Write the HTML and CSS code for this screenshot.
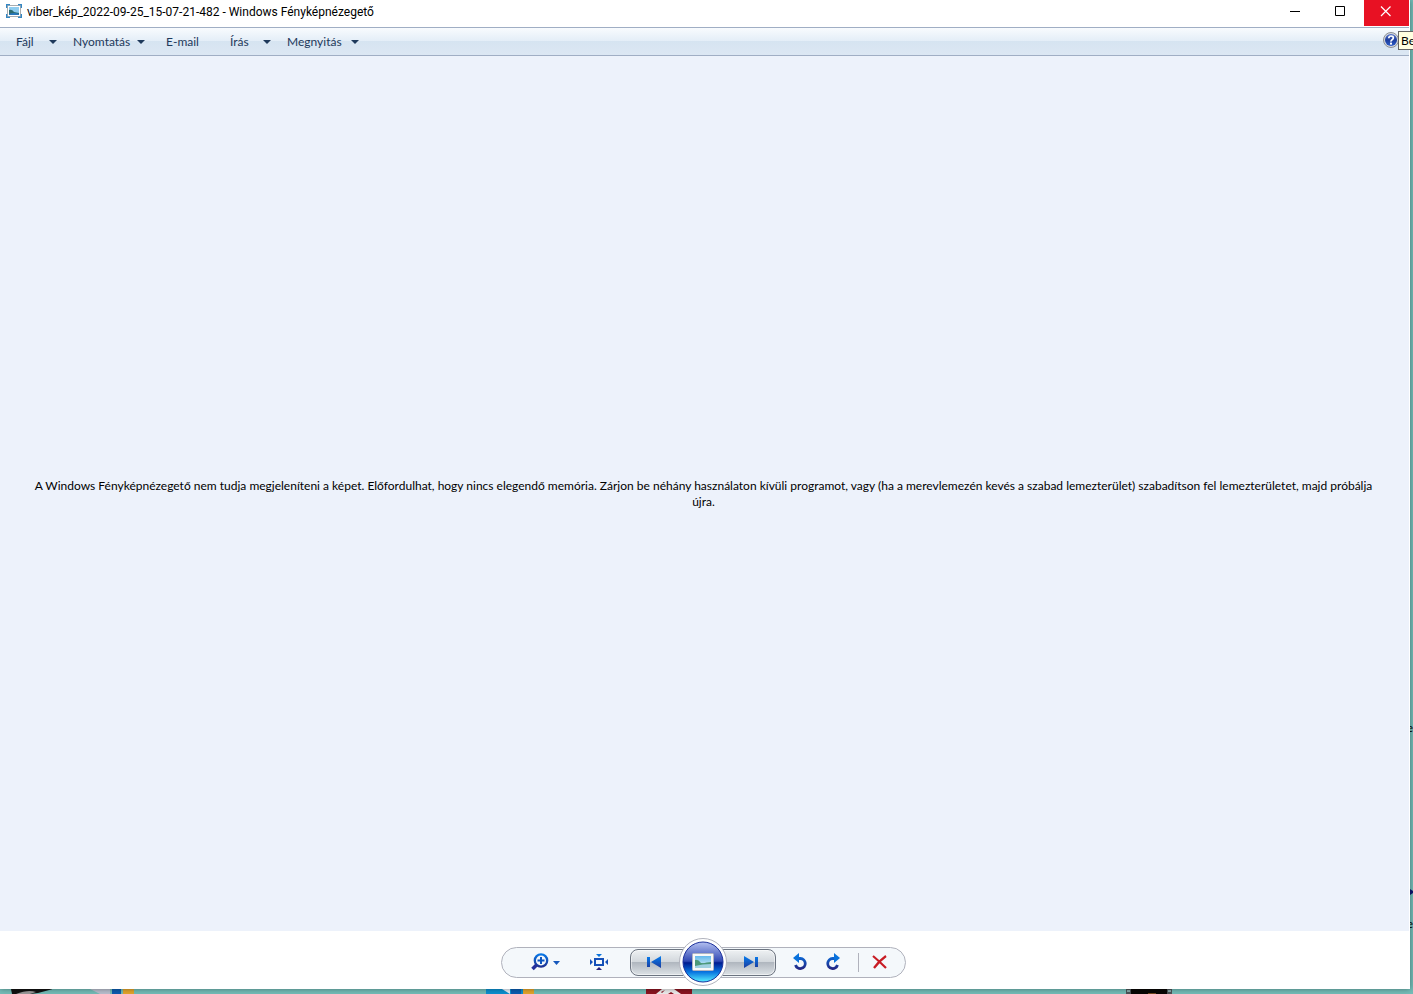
FILE: index.html
```html
<!DOCTYPE html>
<html lang="hu">
<head>
    <meta charset="UTF-8">
    <title>Windows Fényképnézegető</title>
    <link rel="stylesheet" href="styles.css">
</head>
<body>

    <!-- desktop showing around the window -->
    <div class="desktop" aria-hidden="true">
        <svg class="shortcut ink" width="48" height="5"><path d="M7 0h42L34 4l-8 1H8z" fill="#111"/><path d="M12 5q12-5 20-2l-6 2z" fill="#999"/></svg>
        <svg class="shortcut setup" width="48" height="5"><path d="M2 0h20v5H12z" fill="#b9bfce"/><path d="M24 0h9v5h-9z" fill="#0c5cb0"/><path d="M35 0h11v5H35z" fill="#e4a52c"/></svg>
        <svg class="shortcut cloud" width="48" height="5"><path d="M0 0h48v5H0z" fill="#0c90d0"/><path d="M16 0h8v5z" fill="#e8f2fa"/><path d="M25 0h10v5H25z" fill="#0c5cb0"/><path d="M37 0h11v5H37z" fill="#e4a52c"/></svg>
        <svg class="shortcut reader" width="48" height="5"><path d="M0 0h46v5H0z" fill="#8c1420"/><path d="M16 0h12l7 5H10z" fill="#eee"/><path d="M15 3l4-2-3 3zM22 5l3-2 3 2z" fill="#8c1420"/></svg>
        <svg class="shortcut film" width="48" height="5"><path d="M0 0h46v5H0z" fill="#4c5458"/><path d="M5 0h36v5H5z" fill="#080604"/><path d="M22 4h8v1h-8z" fill="#70451c"/><path d="M1 1h3v2H1zM42 1h3v2h-3z" fill="#88a8a8"/></svg>
        <span class="label label-top">e</span>
        <svg class="pointer" width="3" height="6"><path d="M0 0l3 2v2L0 6z" fill="#0c1470"/></svg>
        <span class="label label-bottom">e</span>
    </div>

    <div class="window">
        <header class="titlebar">
            <svg class="app-icon" width="16" height="14" viewBox="0 0 16 14">
                <rect x="1.500" y="1.500" width="13" height="11" fill="#fff" stroke="#a9adb0"/>
                <rect x="3" y="3" width="10" height="8" fill="#8fcdf0"/>
                <path d="M3 6q3-1 5 2l5 1v2H3z" fill="#2c6c70"/>
                <path d="M3 10q5-2 10 0v1H3z" fill="#2878bc"/>
                <path d="M.5 4V.5H4M12 .5h3.500V4M15.500 10v3.500H12M4 13.500H.5V10" fill="none" stroke="#3387c4" stroke-width="1.500"/>
            </svg>
            <h1>viber_kép_2022-09-25_15-07-21-482 - Windows Fényképnézegető</h1>
            <div class="window-buttons">
                <button aria-label="Kis méret"><svg width="11" height="11"><path d="M0 5.500h10" stroke="#000"/></svg></button>
                <button aria-label="Teljes méret"><svg width="11" height="11"><path d="M.5.500h9v9h-9z" fill="none" stroke="#000"/></svg></button>
                <button class="close" aria-label="Bezárás"><svg width="11" height="11"><path d="M1 .5l9.500 9.500M10.500.500L1 10" stroke="#fff" stroke-width="1.200"/></svg></button>
            </div>
        </header>

        <nav class="menubar">
            <button class="menu-short">Fájl <span class="arrow"></span></button>
            <button class="menu-long">Nyomtatás <span class="arrow"></span></button>
            <button class="menu-mail">E-mail</button>
            <button class="menu-short">Írás <span class="arrow"></span></button>
            <button class="menu-long">Megnyitás <span class="arrow"></span></button>
            <button class="help" aria-label="Súgó">
                <svg width="16" height="16" viewBox="0 0 16 16">
                    <defs><linearGradient id="helpFill" x2="0" y2="1"><stop stop-color="#5574c8"/><stop offset=".5" stop-color="#1c3c9c"/><stop offset="1" stop-color="#2c5cc8"/></linearGradient></defs>
                    <circle cx="8" cy="8" r="7.500" fill="#d5d8dc" stroke="#8b8f96"/>
                    <circle cx="8" cy="8" r="6" fill="url(#helpFill)"/>
                    <path d="M5.800 6.300q0-2.300 2.300-2.300t2.200 2q0 1-1.200 1.700T8 9.600" fill="none" stroke="#fff" stroke-width="1.700"/>
                    <rect x="7" y="10.600" width="2" height="2" fill="#fff"/>
                </svg>
            </button>
        </nav>

        <main class="viewer">
            <p>A Windows Fényképnézegető nem tudja megjeleníteni a képet. Előfordulhat, hogy nincs elegendő memória. Zárjon be néhány használaton kívüli programot, vagy (ha a merevlemezén kevés a szabad lemezterület) szabadítson fel lemezterületet, majd próbálja újra.</p>
        </main>

        <footer class="controls">
            <div class="pill">
                <button class="zoom" aria-label="Nagyítás">
                    <svg width="30" height="18" viewBox="0 0 30 18">
                        <defs><linearGradient id="blue" gradientUnits="userSpaceOnUse" x1="0" y1="1" x2="0" y2="17"><stop stop-color="#0878e8"/><stop offset="1" stop-color="#24207c"/></linearGradient></defs>
                        <circle cx="10" cy="7.500" r="6.200" fill="none" stroke="url(#blue)" stroke-width="2.300"/>
                        <path d="M6.500 7.500h7M10 4v7" stroke="#0c55c0" stroke-width="2"/>
                        <path d="M5.500 12L1.500 16" stroke="#24309c" stroke-width="3.500"/>
                        <path d="M22 8h7l-3.500 4z" fill="#1558bc"/>
                    </svg>
                </button>
                <button class="fit" aria-label="Tényleges méret">
                    <svg width="18" height="16" viewBox="0 0 18 16">
                        <rect x="5" y="5" width="8" height="6" fill="none" stroke="#1450b8" stroke-width="2"/>
                        <path d="M6 0h6L9 3z" fill="#0872dc"/>
                        <path d="M6 16h6l-3-3z" fill="#24207c"/>
                        <path d="M0 5v6l3-3zM18 5v6l-3-3z" fill="#1450b8"/>
                    </svg>
                </button>
                <div class="playback">
                    <button class="previous" aria-label="Előző">
                        <svg width="14" height="12" viewBox="0 0 14 12"><path d="M0 1h3v10H0zM14 0v12L4 6z" fill="url(#blue)"/></svg>
                    </button>
                    <button class="slideshow" aria-label="Diavetítés">
                        <svg width="48" height="48" viewBox="0 0 48 48">
                            <defs>
                                <linearGradient id="orb" x2="0" y2="1"><stop stop-color="#b4c0f0"/><stop offset=".48" stop-color="#3048b4"/><stop offset=".52" stop-color="#001c90"/><stop offset=".75" stop-color="#0874e0"/><stop offset="1" stop-color="#58f0ff"/></linearGradient>
                                <linearGradient id="sky" x2="0" y2="1"><stop stop-color="#62b8ec"/><stop offset="1" stop-color="#e0f4f4"/></linearGradient>
                            </defs>
                            <circle cx="24" cy="24" r="23.500" fill="#fff" stroke="#b0b2bc"/>
                            <circle cx="24" cy="24" r="20" fill="url(#orb)" stroke="#1c309c"/>
                            <rect x="13.500" y="15.500" width="21" height="17" rx="1" fill="#f8f8f8" stroke="#b0b4c0"/>
                            <rect x="16" y="18" width="16" height="12" fill="url(#sky)"/>
                            <path d="M16 22q3-1 6 3l10 1v2H16z" fill="#4c9878"/>
                            <path d="M22 26q6-2 10-2v3z" fill="#4c9878"/>
                            <path d="M16 28q7-2 16-2v4H16z" fill="#a0d0e0"/>
                        </svg>
                    </button>
                    <button class="next" aria-label="Következő">
                        <svg width="14" height="12" viewBox="0 0 14 12"><path d="M11 1h3v10h-3zM0 0v12l10-6z" fill="url(#blue)"/></svg>
                    </button>
                </div>
                <button class="rotate" aria-label="Forgatás balra">
                    <svg width="16" height="18" viewBox="0 0 16 18"><path d="M6 5.500h2.500a5 5 0 1 1-5 6.500" fill="none" stroke="url(#blue)" stroke-width="2.800"/><path d="M1 5l6-5v10z" fill="#0872dc"/></svg>
                </button>
                <button class="rotate" aria-label="Forgatás jobbra">
                    <svg width="16" height="18" viewBox="0 0 16 18"><path d="M10 5.500H7.500a5 5 0 1 0 5 6.500" fill="none" stroke="url(#blue)" stroke-width="2.800"/><path d="M15 5L9 0v10z" fill="#0872dc"/></svg>
                </button>
                <span class="divider"></span>
                <button class="delete" aria-label="Törlés">
                    <svg width="16" height="14" viewBox="0 0 16 14"><path d="M1 1q6 5 13 12M14 1Q7 6 2 13" fill="none" stroke="#c81c24" stroke-width="2.200"/></svg>
                </button>
            </div>
        </footer>
    </div>

    <div class="tooltip" role="tooltip">Be</div>

</body>
</html>
```

FILE: styles.css
```css
* {
    box-sizing: border-box;
}

body {
    position: relative;
    margin: 0;
    height: 100vh;
    padding: 0 3px 5px 0;
    overflow: hidden;
    background-color: #74bdb8;
    font-family: Lato, "Open Sans", sans-serif;
    font-size: 12px;
    color: #000;
}

button {
    display: flex;
    align-items: center;
    justify-content: center;
    padding: 0;
    border: none;
    background: none;
    font: inherit;
    color: inherit;
}

svg {
    display: block;
}

/* Desktop */
.desktop {
    position: absolute;
    inset: 0;
    overflow: hidden;
}

.shortcut {
    position: absolute;
    bottom: 0;
}

.ink { left: 4px; }
.setup { left: 88px; }
.cloud { left: 486px; }
.reader { left: 646px; }
.film { left: 1126px; }

.label,
.pointer {
    position: absolute;
    right: 0;
    line-height: 16px;
}

.label-top { top: 720px; }
.pointer { top: 889px; }
.label-bottom { top: 916px; }

/* Window */
.window {
    position: relative;
    display: flex;
    flex-direction: column;
    height: 100%;
    background-color: #fff;
    box-shadow: 0 0 6px rgba(0, 0, 0, 0.4);
}

.titlebar {
    display: flex;
    height: 27px;
    padding: 0 1px 0 6px;
}

.app-icon {
    margin-top: 4px;
}

h1 {
    margin: 0 auto 0 5px;
    font-family: Roboto, sans-serif;
    font-size: 12px;
    font-weight: normal;
    line-height: 24px;
}

.window-buttons {
    display: flex;
}

.window-buttons button {
    width: 45px;
    height: 26px;
    padding: 0 2px 4px 0;
}

.window-buttons .close {
    background-color: #e81123;
}

/* Menu */
.menubar {
    display: flex;
    gap: 16px;
    height: 29px;
    margin-right: 1px;
    padding: 0 10px 0 16px;
    border-top: 1px solid #a0aec4;
    border-bottom: 1px solid #a0aec4;
    background: linear-gradient(#f8fbfe, #e3edf7 50%, #d6e4f1 50%, #dce7f3);
    color: #1e395b;
}

.menubar button {
    justify-content: space-between;
}

.menu-short {
    width: 41px;
}

.menu-long {
    width: 72px;
}

.menubar .menu-mail {
    width: 48px;
    margin-left: 5px;
}

.arrow {
    border: 4px solid transparent;
    border-top-color: #1e395b;
    border-bottom: none;
}

.menubar .help {
    margin-left: auto;
    padding-bottom: 3px;
}

.tooltip {
    position: absolute;
    top: 31px;
    left: calc(100% - 15px);
    padding: 0 2px;
    border: 1px solid #646464;
    background-color: #ffffe1;
    line-height: 17px;
}

/* Picture area */
.viewer {
    display: flex;
    flex: 1;
    align-items: center;
    justify-content: center;
    margin-right: 1px;
    padding: 0 32px 0 30px;
    background-color: #edf2fb;
    text-align: center;
}

.viewer p {
    margin: 0;
    line-height: 16px;
}

/* Controls */
.controls {
    display: flex;
    justify-content: center;
    padding: 16px 4px 11px 0;
}

.pill {
    display: flex;
    align-items: center;
    height: 31px;
    padding: 0 17px 1px 29px;
    border: 1px solid #b0b2bc;
    border-radius: 16px;
    background-color: #f4f8fb;
}

.fit {
    margin: 0 22px 0 29px;
}

.playback {
    display: flex;
    align-items: center;
    margin-right: 16px;
}

.previous,
.next {
    width: 54px;
    height: 27px;
    border: 1px solid #6c7480;
    background: linear-gradient(#eef1f3, #d2d7dc 48%, #b0b7bf 50%, #dde2e6);
    box-shadow: inset 0 0 0 1px rgba(255, 255, 255, 0.5);
}

.previous {
    padding-right: 5px;
    border-radius: 8px 0 0 8px;
}

.next {
    padding-left: 5px;
    border-radius: 0 8px 8px 0;
}

.slideshow {
    position: relative;
    margin: -9px -5px;
}

.rotate {
    margin-right: 17px;
}

.divider {
    width: 1px;
    height: 19px;
    margin-right: 13px;
    background-color: #b0b2bc;
}
```
